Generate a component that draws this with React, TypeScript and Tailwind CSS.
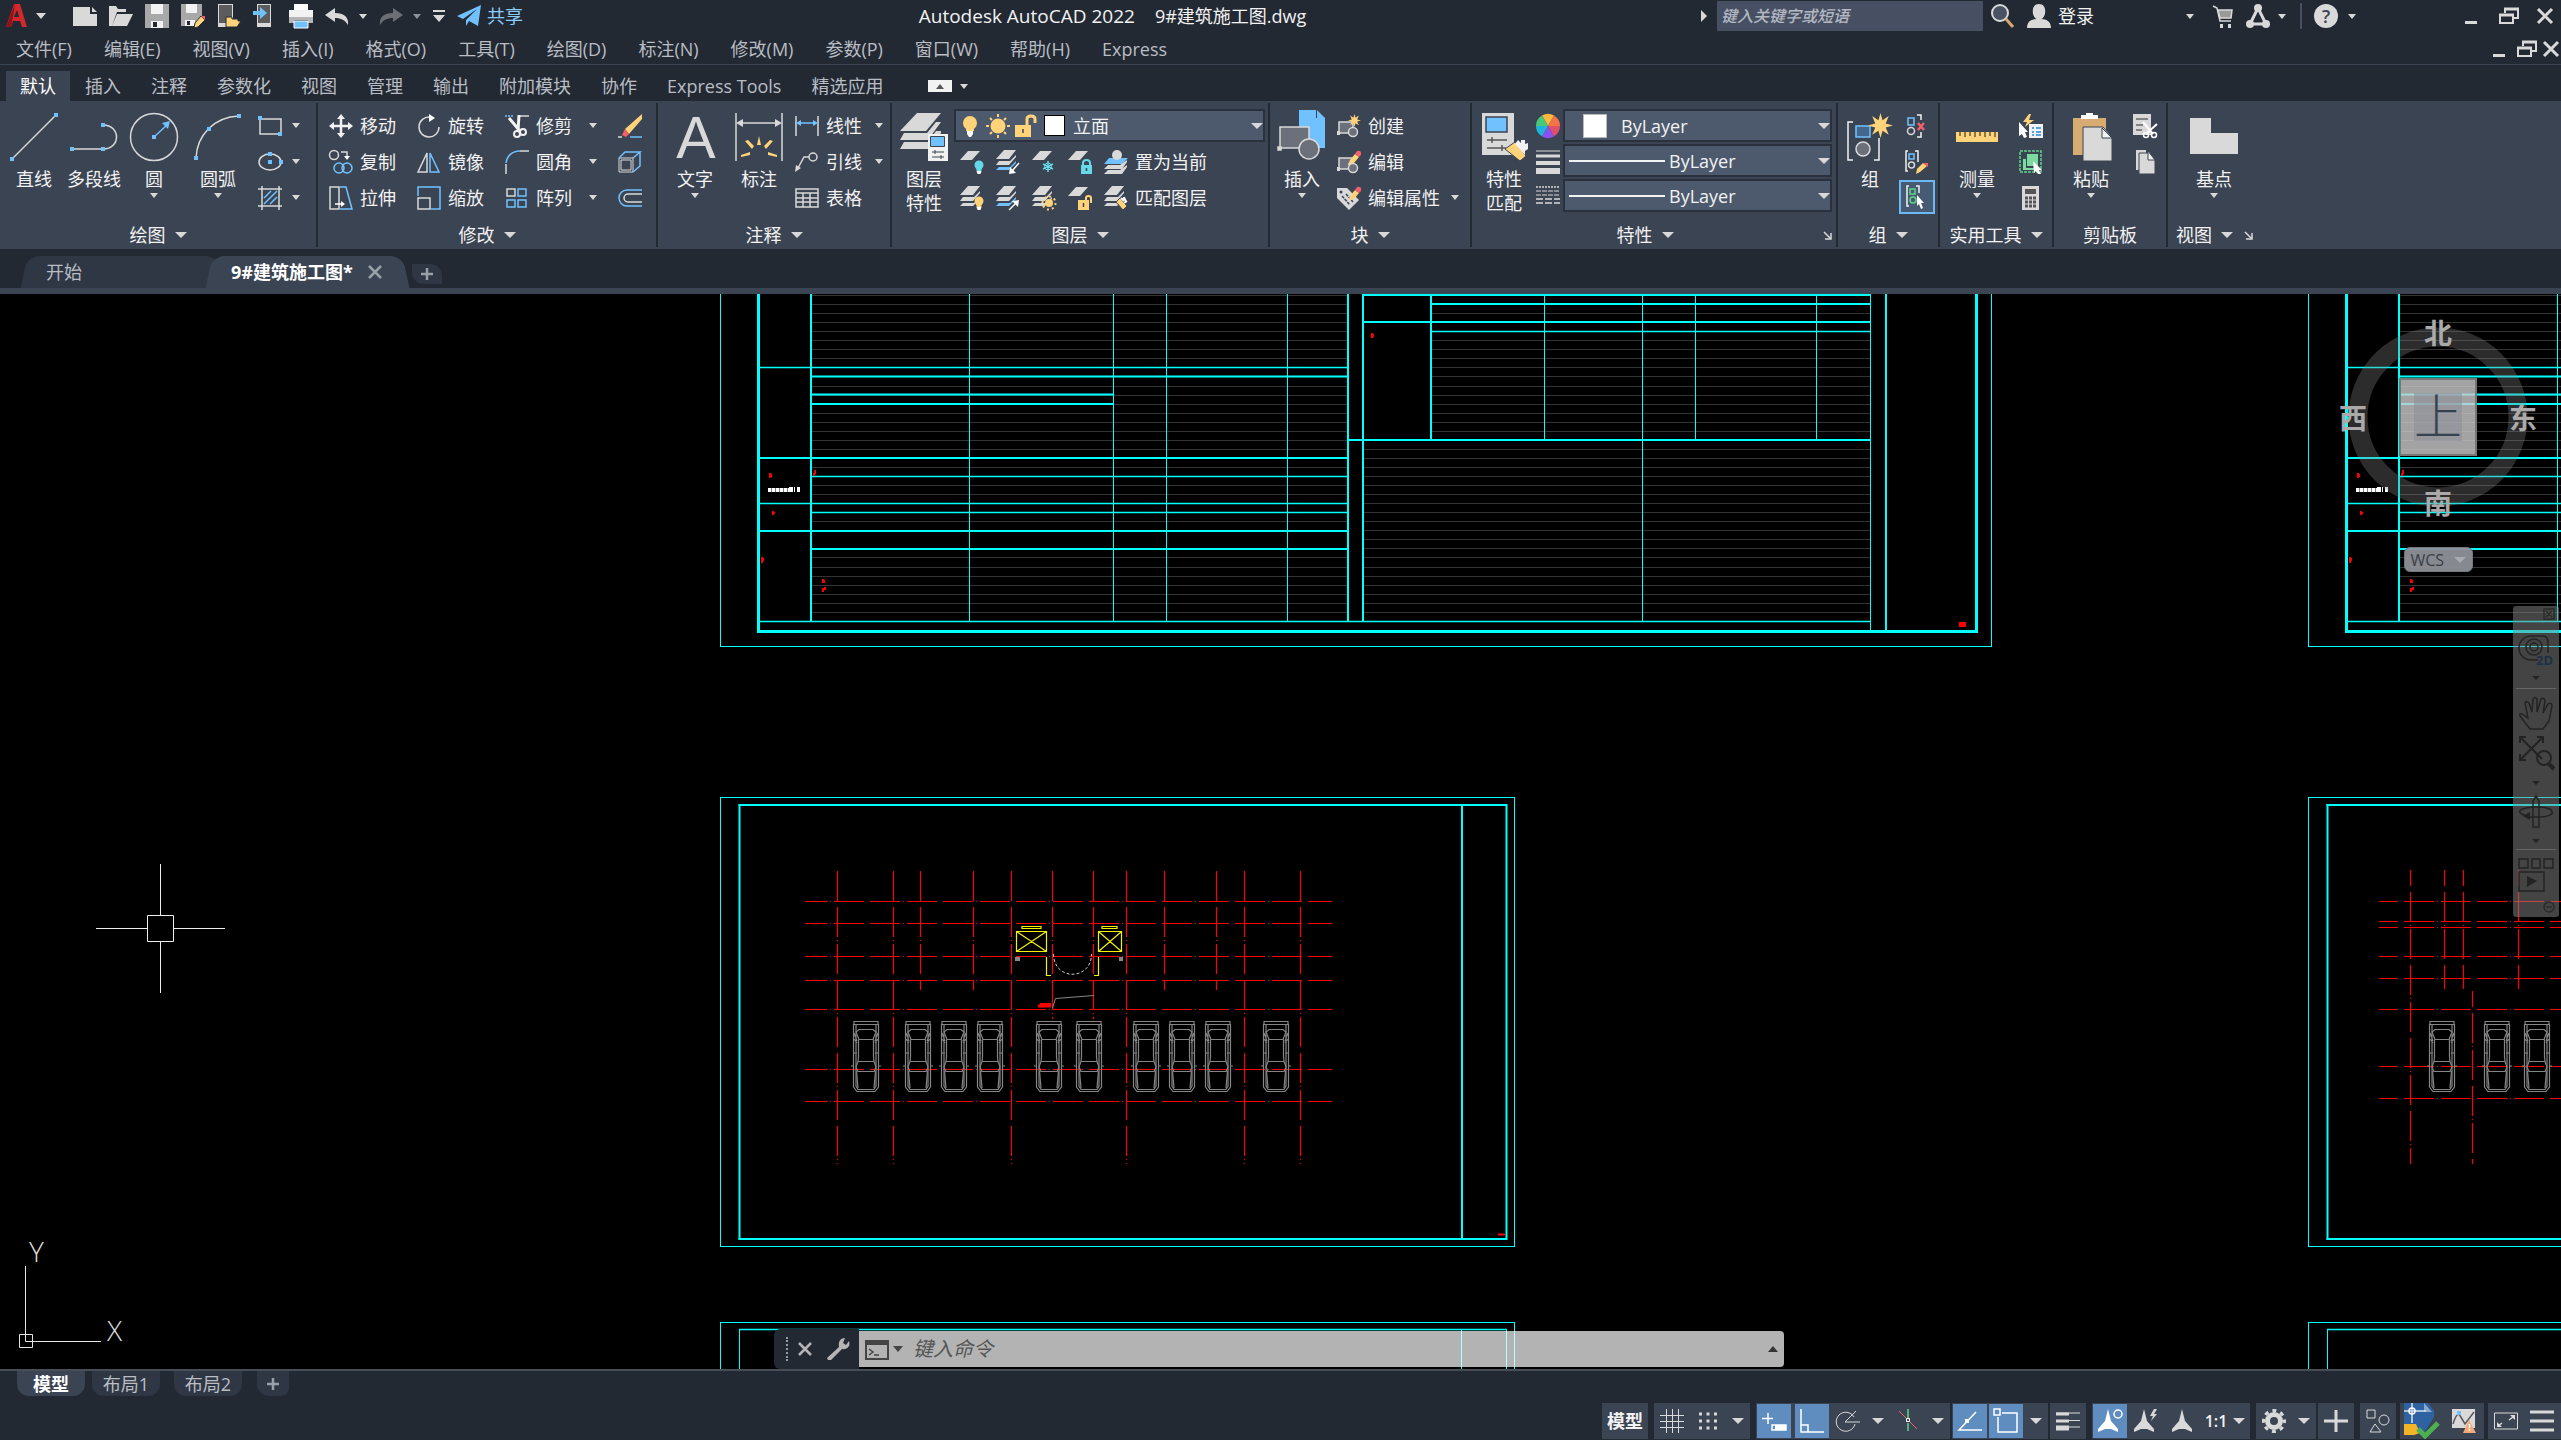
import type { ReactNode } from "react";

const LG = "#d9d9d9";
const BL = "#71c1ff";
const YL = "#ffd37a";
const RD = "#f4606a";
const GR = "#5fd38a";
const CY = "#67d8e8";

/* ---------- helpers ---------- */

function Ic({ children, vb = "0 0 24 24", className = "size-6" }: { children: ReactNode; vb?: string; className?: string }) {
  return (
    <svg viewBox={vb} className={`${className} shrink-0 overflow-visible`} fill="none" stroke={LG} strokeWidth="1.5" aria-hidden="true">
      {children}
    </svg>
  );
}

function Caret({ className = "w-2 h-[5px]" }: { className?: string }) {
  return (
    <svg viewBox="0 0 8 5" className={`${className} shrink-0`} preserveAspectRatio="none" aria-hidden="true">
      <path d="M0 0H8L4 5Z" fill={LG} />
    </svg>
  );
}

function Big({ icon, label, width = "w-16", caret = false }: { icon: ReactNode; label: string[]; width?: string; caret?: boolean }) {
  return (
    <button className={`${width} shrink-0 flex flex-col items-center pt-[5px]`}>
      {icon}
      <span className="mt-1.5 leading-6 whitespace-nowrap flex flex-col">
        {label.map((l) => (
          <span key={l}>{l}</span>
        ))}
      </span>
      {caret && <Caret className="w-2 h-[5px] mt-0.5" />}
    </button>
  );
}

function Small({ icon, label }: { icon: ReactNode; label?: string }) {
  return (
    <button className="h-9 flex items-center gap-[7px] whitespace-nowrap">
      {icon}
      {label && <span>{label}</span>}
    </button>
  );
}

function Drop({ label }: { label: string }) {
  return (
    <button aria-label={label} className="h-9 w-3 flex items-center justify-center pb-0.5">
      <Caret />
    </button>
  );
}

function Launcher() {
  return (
    <Ic vb="0 0 9 9" className="size-[9px]">
      <path d="M1 1L7 7M8 2V8H2" />
    </Ic>
  );
}

function Panel({ title, width, children, caret = true, launcher = false }: { title: string; width: string; children: ReactNode; caret?: boolean; launcher?: boolean }) {
  return (
    <section className={`${width} shrink-0 border-r-2 border-[#222933] flex flex-col`}>
      <div className="h-[117px] pt-[5px] flex items-start">{children}</div>
      <div className={`h-7 pt-1 relative flex items-center justify-center gap-[9px] ${launcher ? "pr-[18px]" : ""}`}>
        <h2>{title}</h2>
        {caret && <Caret className="w-3 h-1.5" />}
        {launcher && (
          <button aria-label={`${title}设置`} className="absolute right-1 top-3">
            <Launcher />
          </button>
        )}
      </div>
    </section>
  );
}

/* small layer glyph: one or three stacked sheets */
function Sheets({ one = false, blue = false, children }: { one?: boolean; blue?: boolean; children?: ReactNode }) {
  return (
    <Ic>
      <g stroke="none" fill={LG}>
        {one ? (
          <path d="M8 1H20L12 10H0Z" />
        ) : (
          <>
            <path d="M8 0H20L13 9H0Z" />
            <path d="M3 11H14L20 5V7L13 15H0Z" />
            <path d="M3 17H14L20 11V13L13 20H0Z" fill={blue ? BL : LG} />
          </>
        )}
      </g>
      {children}
    </Ic>
  );
}

const sunburst = "M12 0L14 7L20 3L17 10L24 12L17 14L20 21L14 17L12 24L10 17L4 21L7 14L0 12L7 10L4 3L10 7Z";

function Pencil() {
  return (
    <g stroke="none">
      <path d="M11 15L13 10L18 4L22 7L17 13Z" fill={YL} />
      <path d="M18 4L20 1Q22 0 24 2V5L22 7Z" fill={RD} />
      <path d="M11 15L12 12L14 14Z" fill={LG} />
    </g>
  );
}

/* ---------- title and menu bars ---------- */

function WindowButtons({ gap }: { gap: string }) {
  return (
    <div className={`flex items-center ${gap}`}>
      <button aria-label="最小化">
        <Ic vb="0 0 12 18" className="w-3 h-[18px]"><path d="M0 15.5H12" strokeWidth="3" /></Ic>
      </button>
      <button aria-label="还原">
        <Ic vb="0 0 20 18" className="w-5 h-[18px]">
          <path d="M6 6V2H19V11H15M1 8H14V16H1Z" strokeWidth="2" />
          <path d="M5 2H20M0 8H15" strokeWidth="3" />
        </Ic>
      </button>
      <button aria-label="关闭">
        <Ic vb="0 0 16 16" className="size-4"><path d="M1 1L15 15M15 1L1 15" strokeWidth="3" /></Ic>
      </button>
    </div>
  );
}

function TitleBar() {
  return (
    <header className="h-8 flex items-center">
      <div className="w-[524px] shrink-0 flex items-center">
        <button aria-label="应用程序菜单" className="flex items-center gap-2 pl-1.5">
          <Ic vb="0 0 22 24" className="w-[22px] h-6">
            <path d="M8 0H14L21 23H16L14 17H7L5 23H0ZM11 6L8 13H13Z" fill="#d0282e" fillRule="evenodd" stroke="none" />
            <path d="M0 23L9 0L7 13L5 23Z" fill="#8e1218" stroke="none" />
          </Ic>
          <Caret className="w-2.5 h-1.5" />
        </button>
        <div className="ml-[27px] flex items-center gap-3">
          <button aria-label="新建">
            <Ic><path d="M0 3H17V10H24V22H0ZM19 3L24 8H19Z" fill={LG} stroke="none" /></Ic>
          </button>
          <button aria-label="打开">
            <Ic><path d="M0 22V2H7L9 5H17V8H8L3 22ZM8 10H24L18 22H3Z" fill={LG} stroke="none" /></Ic>
          </button>
          <button aria-label="保存">
            <Ic>
              <path d="M0 0H24V24H0Z" fill="#a8a8a8" stroke="none" />
              <path d="M6 0H18V10H6ZM6 17H18V24H6Z" fill="#f2f2f2" stroke="none" />
              <path d="M8 18H12V23H8Z" fill="#222933" stroke="none" />
            </Ic>
          </button>
          <button aria-label="另存为">
            <Ic>
              <path d="M0 0H21V18L14 22H0Z" fill="#a8a8a8" stroke="none" />
              <path d="M5 0H16V9H5ZM4 16H14V22H4Z" fill="#f2f2f2" stroke="none" />
              <path d="M6 17H9V21H6Z" fill="#222933" stroke="none" />
              <path d="M13 24L14 19L20 12L24 16L17 23Z" fill={YL} stroke="#222933" strokeWidth="1" />
              <path d="M20 12L24 16V12Z" fill={RD} stroke="none" />
            </Ic>
          </button>
          <button aria-label="从移动设备打开">
            <Ic>
              <path d="M1 0H16V23H1Z" fill={LG} stroke="none" />
              <path d="M2 1H15V19H2Z" fill="#5c5c5c" stroke="none" />
              <path d="M9 23V13H15V15H21V17H24L20 23Z" fill={YL} stroke="#222933" strokeWidth="1" />
            </Ic>
          </button>
          <button aria-label="保存到移动设备">
            <Ic>
              <path d="M4 0H18V23H4Z" fill={LG} stroke="none" />
              <path d="M5 1H17V19H5Z" fill="#5c5c5c" stroke="none" />
              <path d="M0 7H7V3L14 9L7 15V11H0Z" fill={BL} stroke="none" />
            </Ic>
          </button>
        </div>
        <button aria-label="打印" className="ml-3">
          <Ic>
            <path d="M5 0H19V7H5Z" fill="#fff" stroke="none" />
            <path d="M0 6H24V13H0Z" fill="#f2f2f2" stroke="none" />
            <path d="M0 13H24V19H19V16H5V19H0Z" fill="#b5b5b5" stroke="none" />
            <path d="M5 17H19V24H5Z" fill={BL} stroke="#fff" strokeWidth="1" />
          </Ic>
        </button>
        <button aria-label="放弃" className="ml-3">
          <Ic><path d="M0 11L10 4V9C19 9 24 13 23 21C20 16 16 14 10 14V18Z" fill={LG} stroke="none" /></Ic>
        </button>
        <button aria-label="放弃列表" className="ml-2.5"><Caret /></button>
        <button aria-label="重做" className="ml-3 opacity-40">
          <Ic><path d="M24 11L14 4V9C5 9 0 13 1 21C4 16 8 14 14 14V18Z" fill={LG} stroke="none" /></Ic>
        </button>
        <button aria-label="重做列表" className="ml-2.5 opacity-60"><Caret /></button>
        <button aria-label="自定义快速访问工具栏" className="ml-3">
          <Ic vb="0 0 12 12" className="size-3"><path d="M0 1H12" strokeWidth="2" /><path d="M0 5H12L6 12Z" fill={LG} stroke="none" /></Ic>
        </button>
        <button className="ml-3 flex items-center gap-1.5 text-[#8ccbfb]">
          <Ic><path d="M0 12L24 1L21 22L12 17L9 22V16L20 5L6 15Z" fill={BL} stroke="none" /></Ic>
          共享
        </button>
      </div>

      <h1 className="flex-1 flex justify-center gap-5 text-[#f2f2f2] whitespace-nowrap">
        <span className="text-[19px]">Autodesk AutoCAD 2022</span>
        <span>9#建筑施工图.dwg</span>
      </h1>

      <div className="w-[860px] shrink-0 flex items-center">
        <Ic vb="0 0 6 12" className="w-1.5 h-3"><path d="M0 0L6 6L0 12Z" fill={LG} stroke="none" /></Ic>
        <input
          aria-label="搜索"
          placeholder="键入关键字或短语"
          className="ml-2.5 w-[266px] h-[30px] bg-[#475062] px-1 text-base italic font-medium placeholder:text-[#b3b8c2] outline-none"
        />
        <button aria-label="搜索按钮" className="ml-2">
          <Ic><circle cx="9" cy="9" r="8" fill="#4a5361" strokeWidth="2" /><path d="M15 15L22 23" stroke="#d8a86c" strokeWidth="3" /></Ic>
        </button>
        <button className="ml-3 flex items-center gap-[7px] text-[#f2f2f2]">
          <Ic><path d="M12 0C21 0 19 14 14 15C20 15 24 18 24 24H0C0 18 4 15 10 15C5 14 3 0 12 0Z" fill={LG} stroke="none" /></Ic>
          登录
        </button>
        <button aria-label="登录选项" className="ml-[92px]"><Caret /></button>
        <button aria-label="商店" className="ml-[18px]">
          <Ic><path d="M1 2L5 4L8 17H19" /><path d="M6 6H20L19 14H8Z" fill="#999" /><path d="M8 20H11V24H8ZM16 20H19V24H16Z" fill={LG} stroke="none" /></Ic>
        </button>
        <button aria-label="应用" className="ml-2.5 flex items-center gap-2">
          <Ic><path d="M12 4L4 20H20Z" strokeWidth="3" /><g fill={LG} stroke="none"><circle cx="12" cy="4" r="4" /><circle cx="4" cy="20" r="4" /><circle cx="20" cy="20" r="4" /></g></Ic>
          <Caret />
        </button>
        <div className="ml-3.5 w-0.5 h-[26px] bg-[#475062]" />
        <button aria-label="帮助" className="ml-3 flex items-center gap-2.5">
          <span className="size-6 rounded-full bg-[#d9d9d9] text-[#3b4453] font-semibold leading-6 text-center">?</span>
          <Caret />
        </button>
        <div className="flex-1" />
        <div className="pr-2"><WindowButtons gap="gap-[18px] [&>button:nth-child(1)]:mr-1" /></div>
      </div>
    </header>
  );
}

const menus = ["文件(F)", "编辑(E)", "视图(V)", "插入(I)", "格式(O)", "工具(T)", "绘图(D)", "标注(N)", "修改(M)", "参数(P)", "窗口(W)", "帮助(H)", "Express"];
const ribbonTabs = ["默认", "插入", "注释", "参数化", "视图", "管理", "输出", "附加模块", "协作", "Express Tools", "精选应用"];

function MenuBar() {
  return (
    <nav className="h-[33px] pl-4 flex items-center justify-between border-b border-[#3b4453] text-[#b9bdc4]">
      <div className="pt-0.5 flex gap-8 whitespace-nowrap">
        {menus.map((m) => (
          <button key={m} className="leading-6">{m}</button>
        ))}
      </div>
      <div className="pr-0.5 pt-0.5"><WindowButtons gap="gap-1.5 [&>button:nth-child(1)]:mr-1.5" /></div>
    </nav>
  );
}

function RibbonTabs() {
  return (
    <nav className="h-9 pl-1.5 pt-1.5 flex items-center text-[#b9bdc4]">
      {ribbonTabs.map((t, i) => (
        <button key={t} className={i === 0 ? "h-full px-3.5 bg-[#3b4453] text-white" : "h-full px-[15px] whitespace-nowrap"}>
          {t}
        </button>
      ))}
      <button aria-label="最小化为选项卡" className="ml-[30px] flex items-center gap-2">
        <Ic vb="0 0 24 12" className="w-6 h-3"><path d="M0 0H24V12H0Z" fill="#f2f2f2" stroke="none" /><path d="M8 9H16L12 4Z" fill="#555" stroke="none" /></Ic>
        <Caret />
      </button>
    </nav>
  );
}

/* ---------- ribbon panels ---------- */

function Nodes({ at }: { at: number[][] }) {
  return (
    <g fill={BL} stroke="none">
      {at.map(([x, y]) => (
        <rect key={`${x}-${y}`} x={x - 2} y={y - 2} width="4" height="4" />
      ))}
    </g>
  );
}

function DrawPanel() {
  return (
    <Panel title="绘图" width="w-[318px]">
      <div className="w-1 shrink-0" />
      <Big width="w-[60px]" label={["直线"]} icon={<Ic vb="0 0 48 48" className="size-12"><path d="M2 46L46 2" /><Nodes at={[[2, 46], [46, 2]]} /></Ic>} />
      <Big width="w-[60px]" label={["多段线"]} icon={<Ic vb="0 0 48 48" className="size-12"><path d="M2 36H33M33 12C51 12 51 36 33 36" /><Nodes at={[[2, 36], [33, 36], [33, 12]]} /></Ic>} />
      <Big width="w-[60px]" label={["圆"]} caret icon={<Ic vb="0 0 48 48" className="size-12"><circle cx="24" cy="24" r="23.5" /><path d="M24 24L38 11" stroke={BL} /><path d="M40 8L38 16L32 10Z" fill={BL} stroke="none" /><Nodes at={[[24, 24]]} /></Ic>} />
      <Big width="w-[68px]" label={["圆弧"]} caret icon={<Ic vb="0 0 48 48" className="size-12"><path d="M2 45C3 22 20 4 45 3" /><Nodes at={[[2, 45], [15, 16], [45, 3]]} /></Ic>} />
      <div className="ml-1.5 grid grid-cols-[32px_12px]">
        <Small icon={<Ic><path d="M2 5H23V20H2Z" /><Nodes at={[[2, 4], [22, 20]]} /></Ic>} />
        <Drop label="矩形选项" />
        <Small icon={<Ic><ellipse cx="12" cy="12" rx="11" ry="8" /><Nodes at={[[12, 4], [12, 12], [23, 12]]} /></Ic>} />
        <Drop label="椭圆选项" />
        <Small icon={<Ic><path d="M0 3H24M0 20H24M4 0V24M21 0V24" /><path d="M6 12L13 5M6 18L19 5M12 18L19 11" stroke={BL} /></Ic>} />
        <Drop label="图案填充选项" />
      </div>
    </Panel>
  );
}

function ModifyPanel() {
  return (
    <Panel title="修改" width="w-[340px]">
      <div className="ml-[11px] grid grid-cols-[88px_88px_82px_31px_24px]">
        <Small label="移动" icon={<Ic><path d="M12 3V21M3 12H21" strokeWidth="2.5" stroke="#f2f2f2" /><path d="M12 0L16 5H8ZM12 24L16 19H8ZM0 12L5 8V16ZM24 12L19 8V16Z" fill="#f2f2f2" stroke="none" /></Ic>} />
        <Small label="旋转" icon={<Ic><path d="M13 3A10 10 0 1 0 22 13" /><path d="M12 0L18 4L12 8Z" fill="#fff" stroke="none" /></Ic>} />
        <Small label="修剪" icon={<Ic><path d="M0 2H9" stroke={BL} strokeDasharray="2 1" /><path d="M15 2H24" /><path d="M4 4L15 17M14 1L13 17" strokeWidth="3" stroke="#f2f2f2" /><circle cx="12" cy="20" r="3" stroke="#f2f2f2" strokeWidth="2" /><circle cx="18" cy="18" r="3" stroke="#f2f2f2" strokeWidth="2" /></Ic>} />
        <Drop label="修剪选项" />
        <Small icon={<Ic><path d="M24 0V5L11 20L7 15Z" fill={YL} stroke="none" /><path d="M7 15L11 20L8 23L4 21Z" fill={RD} stroke="none" /><path d="M0 23H4" /><path d="M12 23H24" stroke={BL} /></Ic>} />

        <Small label="复制" icon={<Ic><circle cx="5" cy="5" r="4.5" /><path d="M12 2H18V6" /><path d="M15 6H21L18 10Z" fill="#fff" stroke="none" /><circle cx="10" cy="18" r="5" stroke={BL} /><circle cx="18" cy="18" r="5" stroke={BL} /></Ic>} />
        <Small label="镜像" icon={<Ic><path d="M10 3V22H1Z" /><path d="M13 3V22H22Z" stroke={BL} /></Ic>} />
        <Small label="圆角" icon={<Ic><path d="M1 24V14M15 1H24" /><path d="M1 13C2 6 7 1 15 1" stroke={BL} /></Ic>} />
        <Drop label="圆角选项" />
        <Small icon={<Ic><path d="M1 8H15V22H1ZM3 10H13V20H3Z" strokeWidth="1" /><path d="M1 8L7 2H22L15 8M22 2V16L15 22" stroke={BL} /></Ic>} />

        <Small label="拉伸" icon={<Ic><path d="M1 1H10V23H1Z" /><path d="M11 1H17L23 23H11" stroke={BL} /><path d="M6 18H13" stroke="#fff" /><path d="M12 15L16 18L12 21Z" fill="#fff" stroke="none" /></Ic>} />
        <Small label="缩放" icon={<Ic><path d="M1 10V1H23V23H14" stroke={BL} /><path d="M1 12H13V23H1Z" /></Ic>} />
        <Small label="阵列" icon={<Ic><path d="M2 3H10V10H2Z" /><path d="M13 3H21V10H13ZM2 14H10V21H2ZM13 14H21V21H13Z" stroke={BL} /></Ic>} />
        <Drop label="阵列选项" />
        <Small icon={<Ic><path d="M24 4H9A8 8 0 0 0 9 20H24" stroke={BL} /><path d="M24 8H10A4 4 0 0 0 10 16H24" /></Ic>} />
      </div>
    </Panel>
  );
}

function AnnotatePanel() {
  return (
    <Panel title="注释" width="w-[234px]">
      <div className="w-[5px] shrink-0" />
      <Big
        label={["文字"]}
        caret
        icon={
          <Ic vb="0 0 48 48" className="size-12">
            <text x="25" y="45" textAnchor="middle" fill={LG} stroke="none" fontSize="59" fontWeight="500" fontFamily="'Liberation Sans','Open Sans',sans-serif">A</text>
          </Ic>
        }
      />
      <Big
        label={["标注"]}
        icon={
          <Ic vb="0 0 48 48" className="size-12">
            <path d="M1 0V48M47 0V48M4 10H44" />
            <path d="M1 10L8 6V14ZM47 10L40 6V14Z" fill={LG} stroke="none" />
            <path d="M22 32L24 23L26 32ZM17 36L10 28L13 27L19 33ZM31 36L38 28L35 27L29 33ZM15 39L6 42V44L15 42ZM33 39L42 42V44L33 42Z" fill={YL} stroke="none" />
          </Ic>
        }
      />
      <div className="ml-1 grid grid-cols-[78px_16px]">
        <Small label="线性" icon={<Ic><path d="M1 2V22M23 2V22" /><path d="M3 9H21" stroke={BL} /><path d="M1 9L6 6V12ZM23 9L18 6V12Z" fill={BL} stroke="none" /></Ic>} />
        <Drop label="线性选项" />
        <Small label="引线" icon={<Ic><circle cx="18" cy="7" r="4" /><path d="M14 7H9L3 18" /><path d="M0 22L1 15L6 18Z" fill={LG} stroke="none" /></Ic>} />
        <Drop label="引线选项" />
        <Small label="表格" icon={<Ic><path d="M1 3H23V21H1ZM1 7H23M1 12H23M1 16H23M8 7V21M15 7V21" /></Ic>} />
      </div>
    </Panel>
  );
}

function Bulb({ fill, x, y }: { fill: string; x: number; y: number }) {
  return (
    <g stroke="none">
      <circle cx={x} cy={y} r="4.5" fill={fill} />
      <path d={`M${x - 2.5} ${y + 3}h5v3h-5z`} fill={fill} />
      <path d={`M${x - 2.5} ${y + 6}h5l-1 3h-3z`} fill="#fff" />
    </g>
  );
}

function LayersPanel() {
  return (
    <Panel title="图层" width="w-[378px]">
      <div className="w-0.5 shrink-0" />
      <Big
        width="w-[60px]"
        label={["图层", "特性"]}
        icon={
          <Ic vb="0 0 48 48" className="size-12">
            <g fill={LG} stroke="none">
              <path d="M17 0H41L26 18H0Z" />
              <path d="M4 20H27L36 9H41L28 27H0Z" />
              <path d="M4 29H28L36 18H41V20L28 36H0Z" />
              <path d="M28 21H48V48H28Z" fill="#f2f2f2" />
              <path d="M31 24H44V33H31Z" fill={BL} />
            </g>
            <path d="M30.5 23.5H44.5V33.5H30.5ZM32 39H44M32 44H44M35 37V41M41 42V46" stroke="#3b4453" strokeWidth="1" />
          </Ic>
        }
      />
      <div className="flex-1 pr-[3px]">
        <div className="mt-px mb-0.5 h-[33px] flex items-center border-2 border-[#2a313c] bg-[#4d5a6d] pl-1.5">
          <Ic vb="0 0 16 24" className="w-4 h-6"><circle cx="8" cy="9" r="7" fill={YL} stroke="none" /><path d="M4 14H12V17H4Z" fill={YL} stroke="none" /><path d="M5 17H11V20L9 23H7L5 20Z" fill="#fff" stroke="none" /></Ic>
          <Ic className="ml-2 size-6"><circle cx="12" cy="12" r="7.5" fill={YL} stroke="none" /><path d="M12 0V3M12 21V24M0 12H3M21 12H24M4 4L6 6M18 18L20 20M20 4L18 6M4 20L6 18" stroke={YL} strokeWidth="2" /></Ic>
          <Ic className="ml-1 size-6"><path d="M1 11H17V23H1Z" fill={YL} stroke="none" /><path d="M13 11V5Q13 2 17 2Q21 2 21 5V9" stroke={YL} strokeWidth="3" /><path d="M9 15V19" stroke="#3b4453" /></Ic>
          <span className="ml-1.5 w-[21px] h-[21px] bg-white border border-black" />
          <select aria-label="图层" className="ml-2 flex-1 h-full appearance-none outline-none">
            <option>立面</option>
          </select>
          <Caret className="w-3 h-1.5" />
        </div>
        <div className="pl-1.5 flex gap-3">
          <Small icon={<Sheets one><Bulb fill={CY} x={19} y={15} /></Sheets>} />
          <Small icon={<Sheets blue><path d="M23 13L16 21" stroke="#fff" /><path d="M13 24L14 17L20 23Z" fill="#fff" stroke="none" /></Sheets>} />
          <Small icon={<Sheets one><path d="M16 11V22M11 14L21 19M21 14L11 19" stroke={CY} strokeWidth="1.5" /><circle cx="16" cy="16.5" r="3.5" stroke={CY} strokeWidth="1" /></Sheets>} />
          <Small icon={<Sheets one><path d="M13 15H24V24H13Z" fill={CY} stroke="none" /><path d="M15 15V13Q15 10 18.5 10Q22 10 22 13V15" stroke={CY} strokeWidth="2" /><path d="M18.5 18V21" stroke="#3b4453" /></Sheets>} />
          <Small label="置为当前" icon={<Ic><g stroke="none" fill={LG}><path d="M5 8H24L18 14H0Z" fill={BL} /><circle cx="13" cy="5" r="5" /><path d="M4 15H16L23 10V12L18 19H0Z" /><path d="M4 20H16L23 15V17L18 24H0Z" /></g></Ic>} />
        </div>
        <div className="pl-1.5 flex gap-3">
          <Small icon={<Sheets><Bulb fill={YL} x={19} y={15} /></Sheets>} />
          <Small icon={<Sheets blue><path d="M13 24L20 17" stroke="#fff" /><path d="M23 14L22 21L16 15Z" fill="#fff" stroke="none" /></Sheets>} />
          <Small icon={<Sheets><circle cx="17" cy="17" r="4" fill={YL} stroke="none" /><circle cx="17" cy="17" r="6.5" stroke={YL} strokeWidth="2" strokeDasharray="2 3" /></Sheets>} />
          <Small icon={<Sheets one><path d="M10 14H21V24H10Z" fill={YL} stroke="none" /><path d="M18 14V12Q18 10 20.5 10Q23 10 23 12V17" stroke={YL} strokeWidth="2" /><path d="M15.5 17V21" stroke="#3b4453" /></Sheets>} />
          <Small label="匹配图层" icon={<Sheets><path d="M12 16L16 12L23 20L19 24Z" fill={YL} stroke="#3b4453" strokeWidth="1" /><path d="M17 12L20 15M20 11L22 16M23 15L20 17" stroke="#fff" strokeWidth="2" /></Sheets>} />
        </div>
      </div>
    </Panel>
  );
}

function BlockPanel() {
  const base = (
    <>
      <path d="M2 8H16V19H2Z" fill="#6b707b" />
      <circle cx="16" cy="18" r="4.5" fill="#6b707b" />
      <path d="M0 17H3V21H0Z" fill={LG} stroke="none" />
    </>
  );
  return (
    <Panel title="块" width="w-[202px]">
      <Big
        label={["插入"]}
        caret
        icon={
          <Ic vb="0 0 48 48" className="size-12">
            <path d="M21 -3H38V5H47V35H21Z" fill={BL} stroke="none" />
            <path d="M39 -3L47 5H39Z" fill={BL} stroke="none" />
            <path d="M2 14H31V35H2Z" fill="#6b707b" />
            <circle cx="31" cy="36" r="10" fill="#6b707b" />
            <path d="M0 34H3V37H0Z" fill={LG} />
          </Ic>
        }
      />
      <div className="ml-[3px] grid grid-cols-[112px_20px]">
        <Small label="创建" icon={<Ic>{base}<path d={sunburst} transform="translate(11 0) scale(.54)" fill={YL} stroke="none" /></Ic>} />
        <span />
        <Small label="编辑" icon={<Ic>{base}<Pencil /></Ic>} />
        <span />
        <Small label="编辑属性" icon={<Ic><path d="M0 2H10L22 14L12 24L0 12Z" fill={LG} stroke="none" /><path d="M5 10L13 19M9 8L16 16" stroke="#3b4453" strokeDasharray="3 1" /><circle cx="4" cy="6" r="1.5" fill="#3b4453" stroke="none" /><Pencil /></Ic>} />
        <Drop label="编辑属性选项" />
      </div>
    </Panel>
  );
}

function LineSelect({ label }: { label: string }) {
  return (
    <div className="h-[33px] flex items-center border-2 border-[#2a313c] bg-[#4d5a6d] pl-1">
      <span className="w-24 h-0.5 bg-[#f2f2f2]" />
      <select aria-label={label} className="ml-1 flex-1 appearance-none outline-none">
        <option>ByLayer</option>
      </select>
      <Caret className="w-3 h-1.5" />
    </div>
  );
}

function PropsPanel() {
  return (
    <Panel title="特性" width="w-[366px]" launcher>
      <Big
        label={["特性", "匹配"]}
        icon={
          <Ic vb="0 0 48 48" className="size-12">
            <path d="M2 0H34V42H2Z" fill={LG} stroke="none" />
            <path d="M6 4H27V19H6Z" fill={BL} stroke="#3b4453" />
            <path d="M7 27H27M7 35H26M12 24V30M22 32V38" stroke="#555" />
            <path d="M25 36L35 29L46 43L40 48Z" fill={YL} stroke="#3b4453" strokeWidth="1" />
            <path d="M35 31L38 27L41 30V27H45V31L48 30V36L45 38V42Z" fill="#f2f2f2" stroke="none" />
          </Ic>
        }
      />
      <div>
        <Small
          icon={
            <Ic>
              <g stroke="none">
                <path d="M12 12L6 1.6A12 12 0 0 1 18 1.6Z" fill="#fcb93c" />
                <path d="M12 12L18 1.6A12 12 0 0 1 24 12Z" fill="#f4744a" />
                <path d="M12 12H24A12 12 0 0 1 18 22.4Z" fill="#e0506a" />
                <path d="M12 12L18 22.4A12 12 0 0 1 6 22.4Z" fill="#8c50f0" />
                <path d="M12 12L6 22.4A12 12 0 0 1 0 12Z" fill="#20b4d8" />
                <path d="M12 12H0A12 12 0 0 1 6 1.6Z" fill="#48c878" />
              </g>
            </Ic>
          }
        />
        <Small icon={<Ic><path d="M0 1H24" strokeWidth="1" /><path d="M0 6H24" strokeWidth="3" /><path d="M0 13H24" strokeWidth="4" /><path d="M0 21H24" strokeWidth="6" /></Ic>} />
        <Small icon={<Ic><path d="M0 1H24" strokeDasharray="2 1" /><path d="M0 5H24M0 9H24" strokeDasharray="5 1" strokeWidth="1" /><path d="M0 13H24M0 17H24" strokeDasharray="7 2" /></Ic>} />
      </div>
      <div className="ml-[3px] mr-1 mt-px flex-1 flex flex-col gap-0.5">
        <div className="h-[33px] flex items-center border-2 border-[#2a313c] bg-[#4d5a6d] pl-[18px]">
          <span className="size-6 bg-white border border-[#bbb]" />
          <select aria-label="颜色" className="ml-3.5 flex-1 appearance-none outline-none">
            <option>ByLayer</option>
          </select>
          <Caret className="w-3 h-1.5" />
        </div>
        <LineSelect label="线宽" />
        <LineSelect label="线型" />
      </div>
    </Panel>
  );
}

function GroupPanel() {
  return (
    <Panel title="组" width="w-[102px]">
      <div className="w-[3px] shrink-0" />
      <Big
        width="w-[58px]"
        label={["组"]}
        icon={
          <Ic vb="0 0 48 48" className="size-12">
            <path d="M7 9H2V47H7M28 47H33V25" stroke="#f2f2f2" />
            <path d="M10 13H24V24H10Z" stroke={BL} fill="#41678c" />
            <circle cx="17" cy="36" r="7" fill="#6b707b" />
            <path d={sunburst} transform="translate(22 0) scale(1.04)" fill={YL} stroke="none" />
          </Ic>
        }
      />
      <div className="flex flex-col items-center">
        <Small icon={<Ic><path d="M3 4H9V11H3Z" stroke={BL} /><circle cx="6" cy="17" r="3.5" /><path d="M12 1H16V6M16 18V23H12" stroke="#f2f2f2" /><path d="M13 9L19 16M19 9L13 16" stroke={RD} strokeWidth="2.5" /></Ic>} />
        <Small icon={<Ic><path d="M4 4H9V9H4Z" stroke={BL} /><circle cx="6.5" cy="15" r="3" /><path d="M3 1H1V21H3M10 1H13V12" stroke="#f2f2f2" /><path d="M11 24L12 19L18 13L22 16L15 22Z" fill={YL} stroke="none" /><path d="M18 13H23V17Z" fill={RD} stroke="none" /></Ic>} />
        <button aria-label="组选择" className="h-[34px] w-9 flex items-center justify-center border-2 border-[#6cb8f5] bg-[#465a72]">
          <Ic><path d="M5 4H10V9H5Z" stroke={GR} /><circle cx="8" cy="15" r="3" stroke={GR} /><path d="M4 1H2V21H4M11 1H14V8" stroke="#f2f2f2" /><path d="M12 10L19 18L16 18L18 23L16 24L14 19L12 21Z" fill="#fff" stroke="none" /></Ic>
        </button>
      </div>
    </Panel>
  );
}

function UtilPanel() {
  return (
    <Panel title="实用工具" width="w-[114px]">
      <div className="w-[5px] shrink-0" />
      <Big
        label={["测量"]}
        caret
        icon={
          <Ic vb="0 0 48 48" className="size-12">
            <path d="M3 19H45V29H3Z" fill={YL} stroke="none" />
            <path d="M7 19V23M12 19V24M17 19V23M22 19V24M27 19V23M32 19V24M37 19V23M42 19V24" stroke="#6b5a35" />
          </Ic>
        }
      />
      <div className="ml-2.5">
        <Small icon={<Ic><path d="M10 0L4 8H8L6 13L15 6H10L12 0Z" fill={YL} stroke="none" /><path d="M0 8L9 18H6L8 23L5 24L3 20L0 22Z" fill="#fff" stroke="none" /><path d="M10 10H24V24H10Z" fill="#f2f2f2" stroke="none" /><path d="M13 14H15M17 14H22M13 18H15M17 18H22M13 21H15M17 21H22" stroke="#2288e0" /></Ic>} />
        <Small icon={<Ic><path d="M1 1H22V22H1Z" stroke={GR} strokeDasharray="3 1" /><path d="M8 4H19V16H8Z" fill="#7cdba0" stroke="none" /><path d="M4 9H7V18H15V20H4Z" fill="#7cdba0" stroke="none" /><path d="M14 11L23 20H20L22 24H19L17 21L15 23Z" fill="#fff" stroke="none" /></Ic>} />
        <Small icon={<Ic><path d="M3 0H20V24H3Z" fill={LG} stroke="none" /><path d="M6 3H17V8H6Z" fill="#555" stroke="none" /><path d="M6 12H18M6 16H18M6 20H18" stroke="#555" strokeWidth="3" strokeDasharray="3 1" /></Ic>} />
      </div>
    </Panel>
  );
}

function ClipboardPanel() {
  return (
    <Panel title="剪贴板" width="w-[114px]" caret={false}>
      <div className="w-[5px] shrink-0" />
      <Big
        label={["粘贴"]}
        caret
        icon={
          <Ic vb="0 0 48 48" className="size-12">
            <path d="M6 5H39V42H6Z" fill="#d8ab72" stroke="none" />
            <path d="M14 6V2H19V0H26V2H31V6Z" fill="#fff" stroke="none" />
            <path d="M16 14H36L45 24V48H16Z" fill={LG} stroke="#3b4453" strokeWidth="1" />
            <path d="M35 15L45 25H35Z" fill="#f2f2f2" stroke="#3b4453" strokeWidth="1" />
          </Ic>
        }
      />
      <div className="ml-2.5">
        <Small icon={<Ic><path d="M0 0H18V21H0Z" fill={LG} stroke="none" /><path d="M3 5H15M3 11H10M3 16H9" stroke="#666" /><path d="M10 8L20 20M24 10L13 20" stroke="#fff" strokeWidth="2" /><circle cx="13" cy="21" r="2.5" stroke="#fff" /><circle cx="21" cy="21" r="2.5" stroke="#fff" /></Ic>} />
        <Small icon={<Ic><path d="M3 0H13V20H3Z" fill={LG} stroke="none" /><path d="M6 3H15L22 10V24H6Z" fill={LG} stroke="#3b4453" strokeWidth="1" /><path d="M15 1V10H22Z" fill="#f2f2f2" stroke="#3b4453" strokeWidth="1" /></Ic>} />
      </div>
    </Panel>
  );
}

function ViewPanel() {
  return (
    <section className="flex flex-col">
      <div className="h-[117px] pt-[5px] pl-3.5 flex items-start">
        <Big label={["基点"]} caret icon={<Ic vb="0 0 48 48" className="size-12"><path d="M0 5H21V20H48V41H0Z" fill={LG} stroke="none" /></Ic>} />
      </div>
      <div className="h-7 pt-1 pl-2 flex items-center gap-[9px]">
        <h2>视图</h2>
        <Caret className="w-3 h-1.5" />
        <button aria-label="视图设置" className="ml-0.5"><Launcher /></button>
      </div>
    </section>
  );
}

function DocTabs() {
  const tab = "relative h-8 w-[185px] pl-4 flex items-center before:absolute before:inset-y-0 before:-left-1.5 before:w-3/5 before:-skew-x-12 before:rounded-tl-xl after:absolute after:inset-y-0 after:-right-1.5 after:w-3/5 after:skew-x-12 after:rounded-tr-xl";
  return (
    <nav className="h-[39px] pl-[30px] flex items-end">
      <button className={`${tab} text-[#b9bdc4] before:bg-[#2f3745] after:bg-[#2f3745]`}>
        <span className="relative z-10">开始</span>
      </button>
      <button className={`${tab} text-white font-bold before:bg-[#3b4453] after:bg-[#3b4453]`}>
        <span className="relative z-10 flex-1 text-left whitespace-nowrap">9#建筑施工图*</span>
        <Ic vb="0 0 14 14" className="size-3.5 relative z-10 mr-[18px]"><path d="M1 1L13 13M13 1L1 13" stroke="#9aa0a8" strokeWidth="2.5" /></Ic>
      </button>
      <button aria-label="新图形" className="ml-3 mb-1 w-[30px] h-5 rounded-tr-xl rounded-bl-xl bg-[#2f3745] flex items-center justify-center">
        <Ic vb="0 0 12 12" className="size-3"><path d="M6 0V12M0 6H12" stroke="#9aa0a8" strokeWidth="2.5" /></Ic>
      </button>
    </nav>
  );
}

/* ---------- drawing area ---------- */

type L = [number, number, number, number, number?];

const greyLeft = Array.from({ length: 36 }, (_, k) => k).filter((k) => k !== 27);
const scheduleLines: L[] = [
  // left table
  [758.5, 294, 758.5, 632, 3], [811, 294, 811, 621, 2], [969.5, 294, 969.5, 621], [1113.5, 294, 1113.5, 621], [1166.5, 294, 1166.5, 621],
  [1287.5, 294, 1287.5, 621], [1348, 294, 1348, 621, 2], [1363, 294, 1363, 621, 2],
  [758, 367.5, 1348, 367.5, 1.4], [811, 376.5, 1348, 376.5, 1.8], [811, 394.5, 1113, 394.5, 1.8], [811, 404, 1113, 404, 2],
  [758, 458, 1348, 458, 2], [811, 476.5, 1348, 476.5, 1.4], [758, 503.5, 1348, 503.5, 1.4], [811, 512.5, 1348, 512.5, 1.4],
  [758, 531, 1348, 531, 2], [811, 549, 1348, 549, 2],
  // right table
  [1431, 295, 1431, 439, 2], [1544.5, 294, 1544.5, 439], [1642.5, 294, 1642.5, 621], [1695.5, 294, 1695.5, 439], [1816.5, 294, 1816.5, 439],
  [1870.5, 294, 1870.5, 631], [1886, 294, 1886, 631, 2], [1976.5, 294, 1976.5, 632, 3],
  [1363, 295, 1870, 295, 2], [1431, 304, 1870, 304, 2], [1363, 322, 1870, 322, 2], [1431, 331.5, 1870, 331.5, 1.4], [1348, 440, 1870, 440, 2],
  // frame
  [758, 621.5, 1870, 621.5, 1.4], [757, 631.5, 1978, 631.5, 3],
  [720.5, 294, 720.5, 646.5], [1991.5, 294, 1991.5, 646.5], [720, 646.5, 1992, 646.5],
];

function Lines({ data, color }: { data: L[]; color: string }) {
  return (
    <g stroke={color}>
      {data.map(([x1, y1, x2, y2, w], i) => (
        <line key={i} x1={x1} y1={y1} x2={x2} y2={y2} strokeWidth={w || 1} />
      ))}
    </g>
  );
}

function ScheduleSheet() {
  return (
    <g>
      <g stroke="#333">
        {greyLeft.map((k) => {
          const y = 295.5 + Math.round(k * 9.05);
          return <line key={k} x1="811" x2="1348" y1={y} y2={y} />;
        })}
        {Array.from({ length: 36 }, (_, k) => {
          const y = 295.5 + Math.round(k * 9.05);
          return <line key={k} x1={y < 440 ? 1431 : 1363} x2="1870" y1={y} y2={y} />;
        })}
      </g>
      <Lines data={scheduleLines} color="#00ffff" />
      <path d="M770 473v5M771 474v3M815 470v4M814 473v3M773 511v4M774 512v2M762 557v6M763 558v3M823 579v4M824 580v3M823 588v4M825 587v3M1372 333v5M1373 334v3" stroke="#f00" strokeWidth="2" />
      <path d="M768 490H789" stroke="#fff" strokeWidth="4" strokeDasharray="3.5 .5" />
      <path d="M789 489.5H800" stroke="#fff" strokeWidth="5" strokeDasharray="4 1 1 2 3 5" />
      <rect x="1959" y="622" width="7" height="5" fill="#f00" />
    </g>
  );
}

const plan: L[] = [
  [720.5, 797.5, 1514.5, 797.5], [720.5, 1246.5, 1514.5, 1246.5], [720.5, 797, 720.5, 1247], [1514.5, 797, 1514.5, 1247],
  [739.5, 804, 739.5, 1240, 2], [738.5, 805, 1507, 805, 2], [738.5, 1239, 1507, 1239, 2], [1462, 804, 1462, 1240, 2], [1506.5, 804, 1506.5, 1240, 2],
  [720.5, 1322.5, 1514.5, 1322.5], [720.5, 1322, 720.5, 1369], [1514.5, 1322, 1514.5, 1369],
  [739, 1329.5, 1507, 1329.5, 1.4], [739.5, 1329, 739.5, 1369], [1461.5, 1329, 1461.5, 1369], [1506.5, 1329, 1506.5, 1369],
];

const leftV = [[837.5, 871, 1164], [893.5, 871, 1164], [920.5, 871, 990], [973.5, 871, 990], [1011.5, 871, 1164], [1052.5, 871, 1019], [1093.5, 871, 1019], [1126.5, 871, 1164], [1164.5, 871, 990], [1216.5, 871, 990], [1244.5, 871, 1164], [1300.5, 871, 1164]];
const leftH = [901.5, 923.5, 956.5, 980.5, 1009.5, 1069.5, 1101.5];
const rightV = [[2410.5, 870, 1164], [2444.5, 870, 989], [2463.5, 870, 989], [2518.5, 870, 989], [2472.5, 991, 1164]];
const rightH = [901.5, 921.5, 927.5, 956.5, 978.5, 1009.5, 1066.5, 1098.5];
const cars = [866, 918, 954, 990, 1049, 1089, 1146, 1182, 1218, 1276, 2442, 2497, 2537];

function Car({ x }: { x: number }) {
  return (
    <g transform={`translate(${x} 1021)`}>
      <path d="M-12 0.5H12V3.5H-12ZM-12.5 3V66L-9 70.5H9L12.5 66V3M-10 4V65L-8 68.5H8L10 65V4M-12 12L-9 20M12 12L9 20M-12 18L-9 22M12 18L9 22M-12 32H-9M12 32H9" />
      <path d="M-7 18.5L-10 11L-7 8.5H7L10 11L7 18.5ZM-7.5 18.5V36L-8 40.5H8L7.5 36V18.5M-8 40.5L-10 46L-8 50.5H8L10 46L8 40.5M-9.5 50L-8 67M9.5 50L8 67M-15 45H-12M15 45H12" />
    </g>
  );
}

function ModelSpace() {
  return (
    <svg viewBox="0 294 2561 1075" preserveAspectRatio="xMinYMin slice" className="absolute inset-0 w-full h-full" fill="none" aria-label="模型空间">
      <ScheduleSheet />
      <g transform="translate(1588 0)">
        <ScheduleSheet />
      </g>
      <Lines data={plan} color="#00ffff" />
      <g transform="translate(1588 0)">
        <Lines data={plan} color="#00ffff" />
      </g>
      <g stroke="#ff0000" strokeWidth="1.2" strokeDasharray="30 3 1 3 30 6">
        {leftV.map(([x, y1, y2]) => (
          <line key={x} x1={x} x2={x} y1={y1} y2={y2} strokeDashoffset="37" />
        ))}
        {leftH.map((y) => (
          <line key={y} x1="805" x2="1332" y1={y} y2={y} strokeDashoffset="8" />
        ))}
        {rightV.map(([x, y1, y2]) => (
          <line key={x} x1={x} x2={x} y1={y1} y2={y2} strokeDashoffset="51" />
        ))}
        {rightH.map((y) => (
          <line key={y} x1="2379" x2="2561" y1={y} y2={y} strokeDashoffset="48" />
        ))}
      </g>
      <g stroke="#858585" strokeWidth="1.2">
        {cars.map((x) => (
          <Car key={x} x={x} />
        ))}
      </g>
      {/* lift shafts and entrance */}
      <path d="M1016.5 931.5H1046.5V951.5H1016.5ZM1016.5 931.5L1046.5 951.5M1046.5 931.5L1016.5 951.5M1022 926.5H1041V928.5H1022ZM1098.5 931.5H1121.5V951.5H1098.5ZM1098.5 931.5L1121.5 951.5M1121.5 931.5L1098.5 951.5M1102 926.5H1117V928.5H1102ZM1046.5 957V975.5H1051M1098.5 957V975.5H1094" stroke="#f4f400" strokeWidth="1.2" />
      <path d="M1015 957H1020V961H1015ZM1119 957H1123V961H1119Z" fill="#888" />
      <path d="M1053.5 954C1053.5 981 1091.5 981 1091.5 954" stroke="#ccc" strokeDasharray="3 2" />
      <path d="M1052.5 1008L1055.5 998.5L1094 995.5" stroke="#888" />
      <path d="M1038 1006H1051M1040 1004.5H1051" stroke="#f00" strokeWidth="3" />
      <path d="M1498 1234.5H1505" stroke="#f00" strokeWidth="2" />

      {/* cursor */}
      <path d="M96 928.5H147M173 928.5H225M160.5 864V915M160.5 942V993M147.5 915.5H173.5V941.5H147.5Z" stroke="#eee" />
      {/* UCS icon */}
      <path d="M25.5 1266V1341.5H101M19.5 1334.5H32.5V1347.5H19.5Z" stroke="#e6e6e6" />
      <g fill="#ddd" fontFamily="'Open Sans'" fontWeight="300" fontSize="28" textAnchor="middle">
        <text x="36.5" y="1262">Y</text>
        <text x="114.5" y="1341">X</text>
      </g>
    </svg>
  );
}

function ViewCube() {
  return (
    <div className="absolute right-[18px] top-6 w-[210px] flex flex-col items-center">
      <svg viewBox="0 0 210 216" className="w-full overflow-visible" fill="none">
        <circle cx="105" cy="99" r="80" stroke="#888" strokeOpacity=".32" strokeWidth="19" />
        <rect x="67" y="61" width="76" height="76" fill="#ccc" fillOpacity=".8" stroke="#777" strokeWidth="2" />
        <rect x="81" y="75" width="48" height="48" fill="#8c8e98" fillOpacity=".55" />
        <text x="105" y="116" textAnchor="middle" fontSize="48" fill="#37424f" fontFamily="'Noto Sans CJK SC',serif" fontWeight="300">上</text>
        <g fill="#aaa" fontSize="28" fontWeight="700" textAnchor="middle" fontFamily="'Noto Sans CJK SC',sans-serif">
          <text x="105" y="26">北</text>
          <text x="20" y="111">西</text>
          <text x="190" y="111">东</text>
          <text x="105" y="196">南</text>
        </g>
      </svg>
      <button className="mt-[13px] w-[69px] h-[25px] rounded-md border border-[#74767e] bg-[#8e9099]/95 text-[#3a3d45] text-base leading-5 flex items-center justify-between px-1.5">
        WCS
        <svg viewBox="0 0 12 6" className="w-3 h-1.5"><path d="M0 0H12L6 6Z" fill="#a9abb3" /></svg>
      </button>
    </div>
  );
}

function NavBar() {
  const s = "#232323";
  const dot = <svg viewBox="0 0 8 4" className="w-2 h-1"><path d="M0 0H8L4 4Z" fill={s} /></svg>;
  return (
    <div className="absolute right-0.5 top-[312px] w-[46px] h-[311px] rounded-[3px] bg-[#888]/50 flex flex-col items-center">
      <button aria-label="关闭导航栏" className="self-end mr-1 mt-0.5"><Ic vb="0 0 12 12" className="size-3"><path d="M1 1H11V11H1ZM3 3L9 9M9 3L3 9" stroke="#2b2b2b" /></Ic></button>
      <button aria-label="二维控制盘" className="mt-3.5">
        <Ic vb="0 0 36 34" className="w-9 h-[34px]">
          <path d="M20 26H13A12 12 0 0 1 13 2H25Q30 2 30 9V19" stroke={s} />
          <circle cx="16" cy="13" r="8" stroke={s} /><circle cx="16" cy="13" r="4" stroke={s} />
          <text x="18" y="31" fontSize="13" fontWeight="700" fill="#1d3045" stroke="none">2D</text>
        </Ic>
      </button>
      <div className="mt-2">{dot}</div>
      <div className="mt-2 w-10 h-px bg-[#666]" />
      <button aria-label="平移" className="mt-1.5">
        <Ic vb="0 0 36 36" className="size-9">
          <path d="M12 34L2 21Q1 18 4 19L10 23L7 8Q8 5 11 8L14 17L15 4Q17 1 19 4V17L23 4Q26 2 27 6L25 18L30 9Q34 7 34 11L31 26L25 34Z" stroke={s} />
        </Ic>
      </button>
      <button aria-label="范围缩放" className="mt-1">
        <Ic vb="0 0 36 36" className="size-9">
          <path d="M3 3L24 24M24 3L3 24M2 8V2H8M19 2H25V8M2 19V25H8" stroke={s} strokeWidth="2" />
          <circle cx="26" cy="23" r="7" stroke={s} strokeWidth="2" /><path d="M31 29L36 34" stroke={s} strokeWidth="4" />
        </Ic>
      </button>
      <div className="mt-2.5">{dot}</div>
      <button aria-label="动态观察" className="mt-2.5">
        <Ic vb="0 0 36 34" className="w-9 h-[34px]">
          <path d="M15 32V6L18 1L21 6V32ZM8 21C-6 16 6 12 18 12C40 12 38 22 22 22H8" stroke={s} />
          <path d="M5 21L12 17V25Z" fill={s} stroke="none" />
        </Ic>
      </button>
      <div className="mt-2.5">{dot}</div>
      <div className="mt-1.5 w-10 h-px bg-[#666]" />
      <button aria-label="运动显示" className="mt-2">
        <Ic vb="0 0 36 34" className="w-9 h-[34px]">
          <path d="M1 1H10V10H1ZM14 1H22V10H14ZM26 1H35V10H26ZM1 14H26V33H1Z" stroke={s} /><path d="M9 18V29L19 23Z" fill={s} stroke="none" />
        </Ic>
      </button>
      <button aria-label="导航栏设置" className="self-end mr-1 mt-auto mb-1"><Ic vb="0 0 12 12" className="size-3"><circle cx="6" cy="6" r="5" stroke="#2b2b2b" /><path d="M3 6H9" stroke="#2b2b2b" /></Ic></button>
    </div>
  );
}

function CommandLine() {
  return (
    <form className="absolute left-[774px] bottom-0 w-[1010px] h-10 flex items-stretch">
      <div className="w-[85px] rounded-l-md bg-[#222933] flex items-center pl-3">
        <span className="h-6 border-l-2 border-dotted border-[#999]" />
        <button type="button" aria-label="关闭命令行" className="ml-2.5"><Ic vb="0 0 14 14" className="size-3.5"><path d="M1 1L13 13M13 1L1 13" stroke="#b5b5b5" strokeWidth="2.5" /></Ic></button>
        <button type="button" aria-label="自定义" className="ml-3.5">
          <Ic><path d="M2 23L1 21L13 10C12 5 14 1 19 1L17 6L20 8L23 4C25 9 21 13 16 12L5 23Z" fill="#b5b5b5" stroke="none" /></Ic>
        </button>
      </div>
      <div className="flex-1 my-0.5 rounded-r-sm bg-white/70 flex items-center pl-1.5 pr-1.5">
        <button type="button" aria-label="最近使用的命令" className="flex items-center gap-1">
          <Ic><path d="M1 4H23V22H1Z" stroke="#444" strokeWidth="2" /><path d="M1 5H23V8H1Z" fill="#444" stroke="none" /><path d="M4 12L8 15L4 18M9 18H14" stroke="#444" /></Ic>
          <svg viewBox="0 0 10 6" className="w-2.5 h-1.5"><path d="M0 0H10L5 6Z" fill="#444" /></svg>
        </button>
        <input aria-label="命令" placeholder="键入命令" className="ml-2.5 flex-1 bg-transparent text-xl italic placeholder:text-[#555] outline-none" />
        <svg viewBox="0 0 10 6" className="w-2.5 h-1.5"><path d="M0 6H10L5 0Z" fill="#333" /></svg>
      </div>
    </form>
  );
}

/* ---------- bottom bars ---------- */

function LayoutTabs() {
  return (
    <nav className="h-[27px] border-t-2 border-[#474e58] pl-[17px] flex text-[#b9bdc4]">
      <button className="w-[68px] rounded-b-xl bg-[#3b4453] text-white font-bold leading-6">模型</button>
      <button className="ml-[7px] w-[68px] rounded-b-xl bg-[#2f3745] leading-6">布局1</button>
      <button className="ml-3.5 w-[68px] rounded-b-xl bg-[#2f3745] leading-6">布局2</button>
      <button aria-label="新建布局" className="ml-[15px] w-8 rounded-bl-xl rounded-br-lg bg-[#2f3745] flex items-center justify-center">
        <Ic vb="0 0 12 12" className="size-3"><path d="M6 0V12M0 6H12" stroke="#9aa0a8" strokeWidth="2.5" /></Ic>
      </button>
    </nav>
  );
}

function Cell({ children, label, on = false }: { children: ReactNode; label: string; on?: boolean }) {
  return (
    <button aria-label={label} aria-pressed={on} className={on ? "w-9 h-full border border-[#3b4453] bg-[#5f8dc0] flex items-center justify-center" : "w-9 h-full flex items-center justify-center"}>
      {children}
    </button>
  );
}

function CellDrop({ label }: { label: string }) {
  return (
    <button aria-label={label} className="w-6 h-full flex items-center justify-center">
      <Caret className="w-3 h-1.5" />
    </button>
  );
}

const compass = "M12 0L15 12L22 20V23L15 20H9L2 23V20L9 12Z";

function StatusBar() {
  const grp = "h-9 flex items-center bg-[#3b4453]";
  return (
    <footer className="h-[44px] pt-[7px] flex justify-end text-[#f2f2f2]">
      <button className={`${grp} w-[46px] justify-center font-bold mr-1.5`}>模型</button>
      <div className={`${grp} mr-1.5`}>
        <Cell label="栅格"><Ic><path d="M6.5 0V24M12.5 0V24M18.5 0V24M0 6.5H24M0 12.5H24M0 18.5H24" strokeWidth="1" /></Ic></Cell>
        <Cell label="捕捉"><Ic><path d="M3 5H21M3 12H21M3 19H21" strokeWidth="3" strokeDasharray="3 4.5" /></Ic></Cell>
        <CellDrop label="捕捉选项" />
      </div>
      <div className={`${grp} mr-0.5`}>
        <Cell label="动态输入" on><Ic><path d="M6 4V15M0 9.5H11M10 16H24V21H10Z" stroke="#fff" /><path d="M13 16H24V21H13Z" fill="#fff" stroke="none" /></Ic></Cell>
        <span className="w-0.5" />
        <Cell label="正交" on><Ic><path d="M1 0V23H24M1 16H8V23" stroke="#fff" /></Ic></Cell>
        <Cell label="极轴追踪"><Ic><path d="M18 8A9.5 9.5 0 1 0 19 15M9 13L20 2M9 13H24" strokeWidth="1" /></Ic></Cell>
        <CellDrop label="极轴选项" />
        <Cell label="等轴测"><Ic><path d="M12 0V9M12 14V22" stroke={GR} /><path d="M3 2L10 9M14 13L21 20" stroke={RD} strokeWidth="1" /><path d="M10.5 9.5H13.5V12.5H10.5Z" stroke="#fff" strokeWidth="1" /></Ic></Cell>
        <CellDrop label="等轴测选项" />
      </div>
      <div className={`${grp} mr-0.5`}>
        <Cell label="对象捕捉追踪" on><Ic><path d="M18 3L1 21H24" stroke="#fff" /><path d="M7 10H11V14H7Z" fill="#fff" stroke="none" /></Ic></Cell>
        <Cell label="对象捕捉" on><Ic><path d="M8 4H23V23H4V8M0 0H6V6H0Z" stroke="#fff" /></Ic></Cell>
        <CellDrop label="对象捕捉选项" />
      </div>
      <div className={`${grp} mr-1.5`}>
        <Cell label="线宽"><Ic><path d="M0 4H24" strokeWidth="1" /><path d="M0 5H13M0 12H13" strokeWidth="3" /><path d="M0 11.5H24" strokeWidth="1" /><path d="M0 19H13" strokeWidth="5" /><path d="M13 18H24" strokeWidth="1" /></Ic></Cell>
      </div>
      <div className={`${grp} mr-1.5`}>
        <Cell label="注释可见性" on><Ic><path d={compass} transform="translate(-2 0)" fill="#fff" stroke="none" /><circle cx="20" cy="5" r="4" stroke="#fff" /></Ic></Cell>
        <Cell label="自动缩放"><Ic><path d={compass} transform="translate(-2 0)" fill={LG} stroke="none" /><path d="M20 0L16 7H19L17 12L23 5H20L23 0Z" fill={LG} stroke="none" /></Ic></Cell>
        <Cell label="注释比例"><Ic><path d={compass} fill={LG} stroke="none" /></Ic></Cell>
        <button className="w-[50px] h-full flex items-center justify-center gap-1.5 text-base font-semibold">1:1<Caret className="w-3 h-1.5" /></button>
      </div>
      <div className={`${grp} mr-0.5`}>
        <Cell label="切换工作空间">
          <Ic><circle cx="12" cy="12" r="6.5" strokeWidth="5" /><circle cx="12" cy="12" r="10.5" strokeWidth="3" strokeDasharray="4 4.25" strokeDashoffset="2" /></Ic>
        </Cell>
        <CellDrop label="工作空间选项" />
      </div>
      <div className={`${grp} mr-1.5`}>
        <Cell label="注释监视器"><Ic><path d="M12 1V23M0 12H24" strokeWidth="3" /></Ic></Cell>
      </div>
      <div className={`${grp} mr-1`}>
        <Cell label="隔离对象"><Ic><path d="M1 1H9V9H1ZM4 23L9 15L15 23Z" strokeWidth="1" /><circle cx="18" cy="11" r="5" strokeWidth="1" /></Ic></Cell>
      </div>
      <div className={`${grp} mr-1 pl-1 gap-1`}>
        <button aria-label="图形性能">
          <Ic vb="0 0 36 36" className="size-9">
            <path d="M0 0H24L30 8V14L20 30H0Z" fill="#2f62a0" stroke="none" /><path d="M20 0L28 9H20Z" fill="#88a8d0" stroke="none" />
            <path d="M0 21H12L16 30L10 32H0Z" fill="#f4b428" stroke="none" />
            <path d="M8 0V20M0 8H22" stroke="#d8e2ee" /><circle cx="8" cy="8" r="3" stroke="#fff" />
            <path d="M14 26L21 33L34 20" stroke="#4caf50" strokeWidth="5" />
          </Ic>
        </button>
        <button aria-label="硬件加速" className="w-10 flex justify-center">
          <Ic><path d="M0 0H23V19H0Z" fill={LG} stroke="none" /><path d="M1 15Q4 5 7 5L13 15L22 3" stroke="#555" /><path d="M5 2H9V6H5Z" fill={BL} stroke="none" /><path d="M17 11L24 24H11Z" fill="#f5a878" stroke="none" /><path d="M17.5 15V22" stroke="#fff" strokeDasharray="4 1" /></Ic>
        </button>
      </div>
      <div className={`${grp} pr-px`}>
        <Cell label="全屏显示"><Ic><path d="M0.5 4H23.5V20H0.5Z" strokeWidth="1" /><path d="M16 6H21V11ZM3 13V18H8Z" fill={LG} stroke="none" /><path d="M15 11L19 8M4 17L8 14" /></Ic></Cell>
        <Cell label="自定义"><Ic><path d="M0 3H24M0 12H24M0 21H24" strokeWidth="3" /></Ic></Cell>
      </div>
    </footer>
  );
}

export default function App() {
  return (
    <div className="h-screen flex flex-col overflow-hidden bg-[#222933] text-lg leading-6 font-['Open_Sans','Noto_Sans_CJK_SC',sans-serif]">
      <TitleBar />
      <MenuBar />
      <RibbonTabs />
      <div className="h-[148px] py-0.5 bg-[#3b4453] text-[#f2f2f2] flex">
        <DrawPanel />
        <ModifyPanel />
        <AnnotatePanel />
        <LayersPanel />
        <BlockPanel />
        <PropsPanel />
        <GroupPanel />
        <UtilPanel />
        <ClipboardPanel />
        <ViewPanel />
      </div>
      <DocTabs />
      <div className="h-1.5 shrink-0 bg-[#3b4453]" />
      <main className="relative flex-1 bg-black overflow-hidden">
        <ModelSpace />
        <ViewCube />
        <NavBar />
        <CommandLine />
      </main>
      <LayoutTabs />
      <StatusBar />
    </div>
  );
}
